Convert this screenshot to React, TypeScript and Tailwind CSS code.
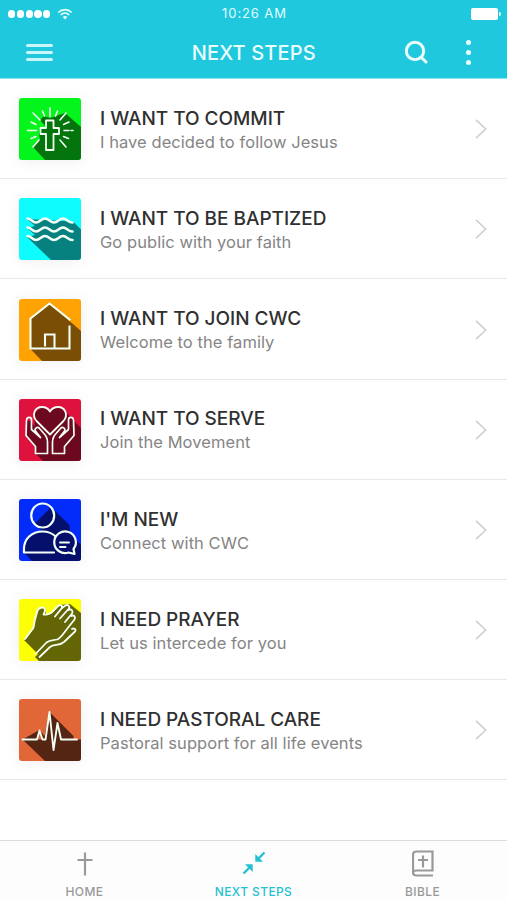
import type { ReactNode } from "react";

type Step = {
  title: string;
  subtitle: string;
  bg: string;
  icon: ReactNode;
};

const steps: Step[] = [
  {
    title: "I WANT TO COMMIT",
    subtitle: "I have decided to follow Jesus",
    bg: "bg-[#03f51c]",
    icon: (
      <>
        <path d="M46 15 62 29V62H26L14 49l7-8-1-5 1-6 6-1-6-7 4-4 6 2Z" fill="#04750d" stroke="none" />
        <path d="M27 22.5h7.5V30H40v6h-5.500v16H27V36h-5.500v-6H27Z" strokeWidth="1.8" />
        <path
          d="M31 10v8.500M8.500 32.500h9M45 32.500h5M52 32.500h2M14 15l7 7M47 15l-6 7M14 49l6-7M47 49l-6-7M23.500 13l2 5M38.500 13l-2 5M12 24l5 2.500M50 24l-5.500 2.500M12 40.500l5-2M49.500 40.500l-5-2"
          strokeWidth="1.6"
        />
      </>
    ),
  },
  {
    title: "I WANT TO BE BAPTIZED",
    subtitle: "Go public with your faith",
    bg: "bg-[#0ffcff]",
    icon: (
      <>
        <path d="M8 21 54 23.500 62 31.500V62H32L8 39l8-2-8-7 8-2Z" fill="#078080" stroke="none" />
        <path
          d="M8.500 20.500c4 0 4.500 4 8.500 4s5-4 9-4 5 4 9 4 5-4 9-4 5 4 9.500 4M8.500 29.500c4 0 4.500 4 8.500 4s5-4 9-4 5 4 9 4 5-4 9-4 5 4 9.500 4M8.500 38c4 0 4.500 4 8.500 4s5-4 9-4 5 4 9 4 5-4 9-4 5 4 9.500 4"
          strokeWidth="2.5"
        />
      </>
    ),
  },
  {
    title: "I WANT TO JOIN CWC",
    subtitle: "Welcome to the family",
    bg: "bg-[#ffa305]",
    icon: (
      <>
        <path d="M11.500 19 30.500 4.500 62 32V62H23L11.500 50Z" fill="#7a4e04" stroke="none" />
        <path
          d="M50.500 20.500 30.500 4.500l-19 15v30h39V27.500M26 46.500v-11h9.500v14"
          strokeWidth="2.1"
          strokeLinecap="square"
          strokeLinejoin="miter"
        />
      </>
    ),
  },
  {
    title: "I WANT TO SERVE",
    subtitle: "Join the Movement",
    bg: "bg-[#df123d]",
    icon: (
      <>
        <path d="M15 14 23 8l8 4 8-4 7 4 7 8 9 9V62H24l-8-8v-7l-8-10V22l4 0 4 6Z" fill="#6c0920" stroke="none" />
        <path d="M31 35.500 17.500 22C12.500 16.500 15.500 8 23 8c4 0 6.500 2 8 4.500C32.500 10 35 8 39 8c7.500 0 10.500 8.500 5.500 14Z" strokeWidth="1.8" />
        <path
          d="M16.500 54.500h12V43c0-4-1-6-4-9l-4-4.500c-2-2.500-5.500 0-4 2.500l5 6.500-9-8V21c0-3.500-4.500-3.500-5 0L7 36.500l9.500 11ZM45.500 54.500h-12V43c0-4 1-6 4-9l4-4.500c2-2.500 5.500 0 4 2.500l-5 6.500 9-8V21c0-3.500 4.500-3.500 5 0L55 36.500l-9.500 11Z"
          strokeWidth="1.7"
        />
      </>
    ),
  },
  {
    title: "I'M NEW",
    subtitle: "Connect with CWC",
    bg: "bg-[#032cfb]",
    icon: (
      <>
        <path d="m32 8 17.500 17c2 3 1 6 2 10L62 46V62H13L5 53.500c0-14 9-21 19-21l-8-8Z" fill="#04106c" stroke="none" />
        <ellipse cx="23.700" cy="16.500" rx="11.500" ry="12" strokeWidth="2.2" />
        <path d="M35 53.500H5V50c0-10 7.500-17.500 18.700-17.500 5 0 9 1.500 12.300 4.500M55.500 55l-6-1.500a10.800 10.800 0 1 1 5-3.500Z" strokeWidth="2.2" />
        <path d="M41 43.500h9M41 48h5.500" strokeWidth="1.900" />
      </>
    ),
  },
  {
    title: "I NEED PRAYER",
    subtitle: "Let us intercede for you",
    bg: "bg-[#fcff05]",
    icon: (
      <>
        <path d="M5 41 14 30l2-10 3-9 5-3 3 2v5h5L41 6l10-1 11 9V62H20l-4-4 3-3Z" fill="#646504" stroke="none" />
        <path
          d="m6 40 8-10.500c1.500-3 1-6 2-9l2.500-9c1.500-3 5-3.500 6.500-2.500s1.500 3-.5 6.500c4 .5 6.500 0 9-3l5.500-5.500c2-2 5.500 0 3.500 2.500l-6.500 8"
          strokeWidth="1.900"
        />
        <path
          d="m43 9 3.500-2.500c2.500-1.500 5 1 3 3.500L41 19.500M49.500 11c3-1.500 5 1 3.500 3.500L46 23M52.500 17c2.500-1.500 4.500 1 3 3.500L48 30c-4 5-6 9-10 10.500-4 1-7 0-10.500 3L16.500 55"
          strokeWidth="1.800"
        />
        <path d="M20.500 58 31 48c4-3.500 9-.5 14-5l11-10.500c1.500-2-1-4-3-2.500" strokeWidth="1.800" />
      </>
    ),
  },
  {
    title: "I NEED PASTORAL CARE",
    subtitle: "Pastoral support for all life events",
    bg: "bg-[#e16739]",
    icon: (
      <>
        <path d="M3.500 40.500 20.500 31l5 6 5-24 9 9 15 15v3.500H62V62H26Z" fill="#552514" stroke="none" />
        <path d="m3.500 40.500 15 0 2-9 3 9z" fill="#e16739" stroke="none" />
        <path d="M3.500 40.500H18l2.500-9 3 9h3l4-27.500 4 38 4-27 3.500 16.500h16" strokeWidth="1.900" />
      </>
    ),
  },
];

function StatusBar() {
  return (
    <div className="flex h-[28px] items-center justify-between pr-[6px] pl-2">
      <div className="flex w-[150px] items-center">
        <div className="flex gap-[1.500px]">
          {[0, 1, 2, 3, 4].map((dot) => (
            <span key={dot} className="size-[7.300px] rounded-full bg-white" />
          ))}
        </div>
        <svg viewBox="0 0 16 12" className="ml-[7px] h-3 w-4" fill="none" stroke="#e9fdff" strokeWidth="1.700">
          <path d="M1.300 4.500C5 .7 11 .7 14.700 4.500M3.700 7c2.500-2.400 6.100-2.400 8.600 0" />
          <path d="M5.700 9Q8 7 10.300 9L8 11.500Z" fill="#e9fdff" stroke="none" />
        </svg>
      </div>
      <span className="text-[13px] tracking-[0.900px] text-[#e0fbff]">10:26 AM</span>
      <div className="flex w-[150px] items-center justify-end">
        <span className="h-3 w-[27px] rounded-[2px] bg-white" />
        <span className="ml-px h-1 w-[2px] rounded-r-full bg-white" />
      </div>
    </div>
  );
}

function Header() {
  return (
    <header className="h-[79px] shrink-0 border-b border-[#8fe6f1] bg-[#1fc8dd]">
      <StatusBar />
      <div className="grid h-[49px] grid-cols-[1fr_auto_1fr] items-center pr-[36px] pl-[25.500px] text-[#e9fdff]">
        <div className="flex w-[27px] flex-col gap-[4px]">
          <span className="h-[3px] rounded-full bg-[#c9f7fd]" />
          <span className="h-[3px] rounded-full bg-[#c9f7fd]" />
          <span className="h-[3px] rounded-full bg-[#c9f7fd]" />
        </div>
        <h1 className="pl-[11px] text-[20px] font-medium tracking-[0.150px]">NEXT STEPS</h1>
        <div className="flex items-center justify-end gap-[38px]">
          <svg viewBox="0 0 24 24" className="size-6" fill="none" stroke="currentColor" strokeWidth="3" strokeLinecap="round">
            <circle cx="11" cy="11" r="8.700" />
            <path d="m17 17 5 5" />
          </svg>
          <div className="flex flex-col gap-[4.500px]">
            <span className="size-[5.300px] rounded-full bg-[#e9fdff]" />
            <span className="size-[5.300px] rounded-full bg-[#e9fdff]" />
            <span className="size-[5.300px] rounded-full bg-[#e9fdff]" />
          </div>
        </div>
      </div>
    </header>
  );
}

function StepRow({ step }: { step: Step }) {
  return (
    <li className="flex h-[100.200px] items-center border-b border-[#e9e9e9] pt-[1.400px] pr-5 pl-[19px]">
      <div className={`size-[62px] shrink-0 overflow-hidden rounded-[3px] shadow-[0_1px_16px_rgba(0,0,0,0.07)] ${step.bg}`}>
        <svg viewBox="0 0 62 62" className="size-full" fill="none" stroke="#f3fff5" strokeLinecap="round" strokeLinejoin="round">
          {step.icon}
        </svg>
      </div>
      <div className="ml-[19px] flex-1 pt-[2px]">
        <h2 className="text-[19px] leading-6 font-medium tracking-[-0.030px] text-[#303030]">{step.title}</h2>
        <p className="text-[16.500px] leading-[23px] tracking-[0.060px] text-[#858585]">{step.subtitle}</p>
      </div>
      <svg viewBox="0 0 12 20" className="h-5 w-3" fill="none" stroke="#cfcfcf" strokeWidth="1.600">
        <path d="m1 .8 9.700 9.200L1 19.200" />
      </svg>
    </li>
  );
}

function TabBar() {
  return (
    <nav className="grid h-[60px] shrink-0 grid-cols-3 border-t border-[#dcdcdc] bg-[#fdfdfd] text-[12px] font-medium tracking-[0.400px] text-[#999]">
      <div className="flex flex-col items-center">
        <svg viewBox="0 0 16 24" className="mt-[11px] h-6 w-4" fill="none" stroke="currentColor" strokeWidth="2.200">
          <path d="M8 .5v23M.5 8h15" />
        </svg>
        <span className="mt-[7px] leading-[18px]">HOME</span>
      </div>
      <div className="flex flex-col items-center text-[#27bfd2]">
        <svg viewBox="0 0 24 24" className="mt-[10px] size-6" fill="none" stroke="currentColor" strokeWidth="2.400">
          <path d="m22.500 1.500-8 8M1.500 22.500l8-8" />
          <path d="M13.300 3v7.700H21ZM3 13.300h7.700V21Z" fill="currentColor" stroke="none" />
        </svg>
        <span className="mt-[8px] leading-[18px]">NEXT STEPS</span>
      </div>
      <div className="flex flex-col items-center">
        <svg viewBox="0 0 22 27" className="mt-[9px] h-[27px] w-[22px]" fill="none" stroke="currentColor" strokeWidth="2.200">
          <path d="M21 25.500H4.500C2.500 25.500 1 24.500 1 22.500V4.500c0-2 1.500-3 3.500-3H20.500v19h-16C2.500 20.500 1 21.500 1 23M11 5.500v12M6 10h10" />
        </svg>
        <span className="mt-[6px] leading-[18px]">BIBLE</span>
      </div>
    </nav>
  );
}

export default function App() {
  return (
    <div className="flex h-[900px] w-[507px] flex-col overflow-hidden bg-white font-['Inter',sans-serif]">
      <Header />
      <ul className="flex-1">
        {steps.map((step) => (
          <StepRow key={step.title} step={step} />
        ))}
      </ul>
      <TabBar />
    </div>
  );
}
